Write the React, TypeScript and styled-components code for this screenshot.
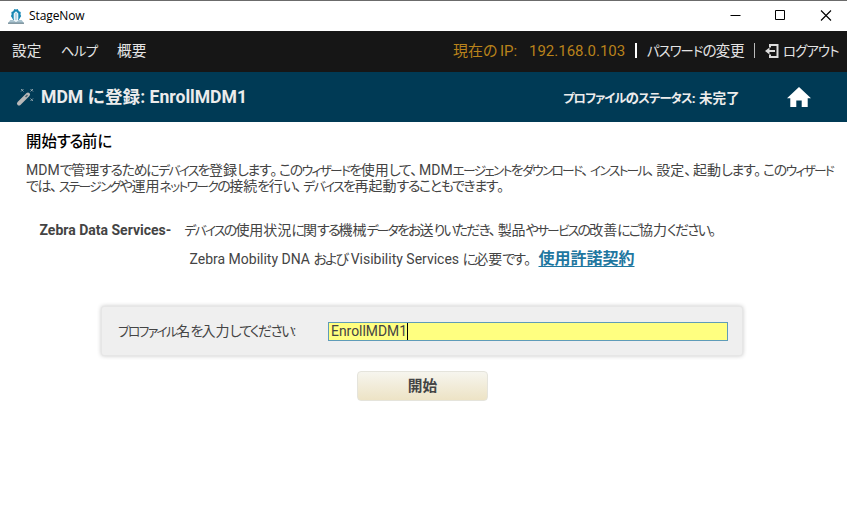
import React from "react";
import styled, { createGlobalStyle } from "styled-components";

const GlobalStyle = createGlobalStyle`
  * { box-sizing: border-box; }
  body { margin: 0; background: #fff; overflow: hidden; font-family: Roboto, "Noto Sans CJK JP", sans-serif; color: #444; }
`;

const Window = styled.div`
  display: flex;
  flex-direction: column;
  width: 847px;
  height: 509px;
  background: #fff;
  border-top: 1px solid #6b6b6b;
`;

const Kana = styled.span<{ $tight: number; $size?: number }>`
  font-feature-settings: "palt";
  font-size: ${(p) => p.$size ?? 1}em;
  line-height: 0;
  letter-spacing: ${(p) => p.$tight}em;
`;

const KANA_RUN = /([\u3041-\u309f]+|[\u30a0-\u30ff]+|[\u3001\u3002]+)/;

interface JaProps {
  children: string;
  hira?: number;
  kata?: number;
}

/** Sets Japanese text with proportional, tightened kana between full-width kanji. */
const Ja = ({ children, hira = -0.08, kata = -0.105 }: JaProps) => (
  <>
    {children.split(KANA_RUN).map((run, i) => {
      if (/^[\u3041-\u309f]/.test(run)) return <Kana key={i} $tight={hira}>{run}</Kana>;
      if (/^[\u30a0-\u30ff]/.test(run)) return <Kana key={i} $tight={kata} $size={0.91}>{run}</Kana>;
      if (/^[\u3001\u3002]/.test(run)) return <Kana key={i} $tight={0.12}>{run}</Kana>;
      return run;
    })}
  </>
);

const Line = styled.span<{ $w?: number }>`
  display: block;
  flex: none;
  white-space: nowrap;
  width: ${(p) => (p.$w ? `${p.$w}px` : "auto")};
`;

const TitleBar = styled.header`
  display: flex;
  align-items: center;
  height: 30px;
  padding-left: 8px;
  font: 12px/16px "Open Sans", "Noto Sans", sans-serif;
  color: #000;
`;

const AppName = styled.span`
  flex: 1;
  margin-left: 5px;
  letter-spacing: -0.1px;
`;

const WindowButtons = styled.div`
  display: flex;
  svg { display: block; width: 45.5px; height: 30px; }
`;

const MenuBar = styled.nav`
  display: flex;
  align-items: center;
  height: 41px;
  padding: 0 0 2px 12px;
  background: #161616;
  color: #e4e4e4;
  font-size: 14.67px;
  line-height: 20px;
`;

const Spacer = styled.div`
  flex: 1;
`;

const Address = styled(Line)`
  color: #b9821b;
  font-size: 15px;
`;

const Divider = styled.span<{ $thick?: boolean; $gap: string }>`
  width: ${(p) => (p.$thick ? 2 : 1)}px;
  height: 15px;
  margin: ${(p) => p.$gap};
  background: ${(p) => (p.$thick ? "#fff" : "#bbb")};
`;

const LogoutIcon = styled.svg`
  margin-right: 4px;
`;

const PageBar = styled.div`
  display: flex;
  align-items: center;
  height: 50px;
  padding: 0 36px 0 16px;
  background: #003a55;
  color: #ececec;
`;

const PageTitle = styled.h1`
  flex: 1;
  margin: 0 0 0 6px;
  font-size: 17.6px;
  font-weight: 700;
  line-height: 24px;
  white-space: nowrap;
`;

const Status = styled(Line)`
  font-size: 13.6px;
  font-weight: 700;
`;

const HomeIcon = styled.svg`
  margin-left: 47px;
`;

const Content = styled.main`
  display: flex;
  flex-direction: column;
  font-size: 14px;
`;

const Heading = styled.h2`
  margin: 10px 0 0 26px;
  font-size: 15.4px;
  font-weight: 500;
  line-height: 20px;
  color: #000;
`;

const Intro = styled.div`
  margin: 10px 0 0 26px;
  line-height: 16px;
`;

const Services = styled.div`
  display: grid;
  grid-template-columns: 145px 1fr;
  margin: 26px 0 0 39.5px;
  line-height: 20px;
`;

const ServiceName = styled.strong`
  font-weight: 700;
  white-space: nowrap;
`;

const Requirement = styled.div`
  display: flex;
  grid-column: 2;
  height: 20px;
  margin: 9px 0 0 5px;
`;

const License = styled.a`
  color: #1f77a0;
  font-size: 16px;
  font-weight: 700;
  text-decoration: underline;
  text-underline-offset: 2px;
`;

const Panel = styled.div`
  display: flex;
  align-items: center;
  width: 642px;
  height: 50px;
  margin: 37px 0 0 101px;
  padding: 0 14px 0 16px;
  background: #efefef;
  border: 1px solid #e6e6e6;
  border-radius: 3px;
  box-shadow: 0 0 4px rgba(0, 0, 0, 0.22);
`;

const FieldLabel = styled(Line)`
  padding-bottom: 2px;
`;

const Field = styled.div`
  display: flex;
  align-items: center;
  width: 400px;
  height: 19px;
  padding-left: 2px;
  background: #ffff80;
  border: 1px solid #5f9cb8;
  font-size: 13.9px;
`;

const Caret = styled.span`
  width: 1px;
  height: 17px;
  background: #000;
`;

const StartButton = styled.button`
  width: 131px;
  height: 30px;
  margin: 15px 0 0 357px;
  padding: 0 0 3px;
  border: 1px solid #e5e4dc;
  border-radius: 4px;
  background: linear-gradient(#f6f5ee, #ede3c5);
  color: #444;
  font: 700 14.67px/20px "Noto Sans CJK JP", sans-serif;
`;

const App = () => (
  <Window>
    <GlobalStyle />
    <TitleBar>
      <svg width="16" height="16" viewBox="0 0 16 16">
        <path d="M5.2 12 4 9.8 2.9 8l.7-1.3L3.4 4l1.8-.8L6.4 1 8 1.4 9.7 1l1.2 2.2 1.8.8-.2 2.7.7 1.3-1.1 1.8L10.8 12z" fill="#1687b4" />
        <path d="M5.7 11.5V5.6L8 3.2l2.3 2.4v5.9L8 13.6z" fill="#e8f4fa" />
        <path d="M8 5v7" stroke="#8fb9cd" strokeWidth="1" />
        <path d="M0 15.3 2.3 12h3L8 14l2.7-2h3l2.3 3.3z" fill="#a9c3cf" />
        <path d="M0 15.2h16" stroke="#58717f" strokeWidth="1" />
      </svg>
      <AppName>StageNow</AppName>
      <WindowButtons>
        <svg viewBox="0 0 45.5 30"><path d="M19.5 14.5h10" stroke="#000" /></svg>
        <svg viewBox="0 0 45.5 30"><path d="M19.5 9.5h9v9h-9z" fill="none" stroke="#000" /></svg>
        <svg viewBox="0 0 45.5 30"><path d="m19 9.5 10 10m0-10-10 10" stroke="#000" strokeWidth="1.1" /></svg>
      </WindowButtons>
    </TitleBar>
    <MenuBar>
      <Line $w={49}>設定</Line>
      <Line $w={56}><Ja kata={-0.04}>ヘルプ</Ja></Line>
      <Line>概要</Line>
      <Spacer />
      <Address $w={76}><Ja>現在の IP:</Ja></Address>
      <Address $w={96}>192.168.0.103</Address>
      <Divider $thick $gap="0 10px" />
      <Line $w={99}><Ja kata={-0.07}>パスワードの変更</Ja></Line>
      <Divider $gap="0 10px 0 8px" />
      <LogoutIcon width="14" height="14" viewBox="0 0 14 14" fill="none" stroke="#ddd" strokeWidth="2">
        <path d="M5 3.5V1h7.500v12H5v-2.500" />
        <path d="M2 7h8" />
        <path d="M4.500 3.500v7L0 7z" fill="#ddd" stroke="none" />
      </LogoutIcon>
      <Line $w={64}><Ja kata={-0.06}>ログアウト</Ja></Line>
    </MenuBar>
    <PageBar>
      <svg width="19" height="20" viewBox="0 0 19 20">
        <path d="m3 16.500 9-9" stroke="#b8b8b8" strokeWidth="4" strokeLinecap="round" />
        <path d="m9.500 10 2-2" stroke="#46606c" strokeWidth="1.500" />
        <path d="m5 2 2.500 2.500m0-2.500L5 4.500M14.500 2 17 4.500M17 2l-2.500 2.500M14.500 11.500l2.500 2.500m0-2.500L14.500 14" stroke="#a9b5bb" strokeWidth="0.800" />
      </svg>
      <PageTitle><Ja hira={0.02}>MDM に登録: EnrollMDM1</Ja></PageTitle>
      <Status $w={177}><Ja kata={-0.075} hira={-0.04}>プロファイルのステータス: 未完了</Ja></Status>
      <HomeIcon width="24" height="20" viewBox="0 0 24 20">
        <path d="M12 0 0 11.200h3.300V20h6v-6.500h5.400V20h6v-8.800H24z" fill="#fff" />
      </HomeIcon>
    </PageBar>
    <Content>
      <Heading><Ja>開始する前に</Ja></Heading>
      <Intro>
        <Line><Ja hira={-0.1} kata={-0.136}>MDMで管理するためにデバイスを登録します。このウィザードを使用して、MDMエージェントをダウンロード、インストール、設定、起動します。このウィザード</Ja></Line>
        <Line><Ja hira={-0.1} kata={-0.127}>では、ステージングや運用ネットワークの接続を行い、デバイスを再起動することもできます。</Ja></Line>
      </Intro>
      <Services>
        <ServiceName>Zebra Data Services-</ServiceName>
        <Line><Ja hira={-0.132} kata={-0.138}>デバイスの使用状況に関する機械データをお送りいただき、製品やサービスの改善にご協力ください。</Ja></Line>
        <Requirement>
          <Line $w={349}><Ja hira={-0.13}>Zebra Mobility DNA および Visibility Services に必要です。</Ja></Line>
          <License>使用許諾契約</License>
        </Requirement>
      </Services>
      <Panel>
        <FieldLabel $w={210}><Ja hira={-0.12} kata={-0.13}>プロファイル名を入力してください:</Ja></FieldLabel>
        <Field>EnrollMDM1<Caret /></Field>
      </Panel>
      <StartButton>開始</StartButton>
    </Content>
  </Window>
);

export default App;
